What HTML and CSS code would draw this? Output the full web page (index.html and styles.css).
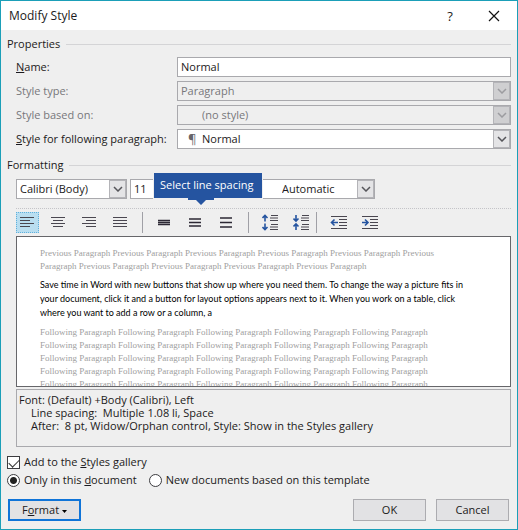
FILE: index.html
```
<!DOCTYPE html>
<html lang="en">
<head>
    <meta charset="UTF-8">
    <meta name="viewport" content="width=device-width, initial-scale=1.0">
    <title>Modify Style</title>
    <link rel="stylesheet" href="styles.css">
</head>
<body>

    <form class="dialog">
        <!-- Title bar -->
        <header class="title-bar">
            <h1>Modify Style</h1>
            <button type="button" class="title-btn" aria-label="Help">?</button>
            <button type="button" class="title-btn" aria-label="Close">
                <svg width="12" height="12" viewBox="0 0 12 12"><path d="M1 1L11 11M11 1L1 11" stroke="#111" stroke-width="1.2"/></svg>
            </button>
        </header>

        <main class="content">
            <!-- Properties -->
            <h2 class="section-title">Properties</h2>
            <div class="properties">
                <label for="name"><u>N</u>ame:</label>
                <div class="field"><input id="name" type="text" value="Normal"></div>

                <label for="type" class="off">Style type:</label>
                <div class="field combo off">
                    <select id="type" disabled><option>Paragraph</option></select>
                    <span class="arrow"><svg width="10" height="6" viewBox="0 0 10 6"><path d="M1 1L5 5L9 1"/></svg></span>
                </div>

                <label for="based" class="off">Style based on:</label>
                <div class="field combo off">
                    <select id="based" class="indent" disabled><option>(no style)</option></select>
                    <span class="arrow"><svg width="10" height="6" viewBox="0 0 10 6"><path d="M1 1L5 5L9 1"/></svg></span>
                </div>

                <label for="following"><u>S</u>tyle for following paragraph:</label>
                <div class="field combo">
                    <span class="pilcrow">¶</span>
                    <select id="following" class="indent"><option>Normal</option></select>
                    <span class="arrow"><svg width="10" height="6" viewBox="0 0 10 6"><path d="M1 1L5 5L9 1"/></svg></span>
                </div>
            </div>

            <!-- Formatting -->
            <h2 class="section-title formatting-title">Formatting</h2>
            <div class="font-row">
                <div class="field combo font-name">
                    <select aria-label="Font"><option>Calibri (Body)</option></select>
                    <span class="arrow"><svg width="10" height="6" viewBox="0 0 10 6"><path d="M1 1L5 5L9 1"/></svg></span>
                </div>
                <div class="field combo font-size">
                    <select aria-label="Font size"><option>11</option></select>
                </div>
                <div class="field combo font-color">
                    <select class="indent" aria-label="Font color"><option>Automatic</option></select>
                    <span class="arrow"><svg width="10" height="6" viewBox="0 0 10 6"><path d="M1 1L5 5L9 1"/></svg></span>
                </div>
            </div>

            <div class="toolbar">
                <div class="tool-group">
                    <button type="button" class="tool active" aria-label="Align left">
                        <svg width="15" height="11" viewBox="0 0 15 11"><path d="M0 0.5H14M0 3.5H10M0 6.5H14M0 9.5H10"/></svg>
                    </button>
                    <button type="button" class="tool" aria-label="Center">
                        <svg width="15" height="11" viewBox="0 0 15 11"><path d="M0 0.5H14M2 3.5H12M0 6.5H14M2 9.5H12"/></svg>
                    </button>
                    <button type="button" class="tool" aria-label="Align right">
                        <svg width="15" height="11" viewBox="0 0 15 11"><path d="M0 0.5H14M4 3.5H14M0 6.5H14M4 9.5H14"/></svg>
                    </button>
                    <button type="button" class="tool" aria-label="Justify">
                        <svg width="15" height="11" viewBox="0 0 15 11"><path d="M0 0.5H14M0 3.5H14M0 6.5H14M0 9.5H14"/></svg>
                    </button>
                </div>
                <div class="tool-group">
                    <button type="button" class="tool thick" aria-label="Single spacing">
                        <svg width="13" height="11" viewBox="0 0 13 11"><path d="M0 3.5H12M0 5.5H12M0 7.5H12"/></svg>
                    </button>
                    <div class="tip-anchor">
                        <button type="button" class="tool thick" aria-label="1.5 spacing" aria-describedby="tip">
                            <svg width="13" height="11" viewBox="0 0 13 11"><path d="M0 2H12M0 5.500H12M0 9H12"/></svg>
                        </button>
                        <div class="tooltip" id="tip" role="tooltip">Select line spacing
                            <svg class="tip-arrow" width="26" height="7" viewBox="0 0 26 7"><path d="M0 0H26V2H18L13 7L8 2H0Z"/></svg>
                        </div>
                    </div>
                    <button type="button" class="tool thick" aria-label="Double spacing">
                        <svg width="13" height="11" viewBox="0 0 13 11"><path d="M0 1H12M0 5.500H12M0 10H12"/></svg>
                    </button>
                </div>
                <div class="tool-group">
                    <button type="button" class="tool" aria-label="Increase paragraph spacing">
                        <svg width="17" height="17" viewBox="0 0 17 17"><path d="M9 1.500H16M8 4H16M8 6.500H16M9 10.500H16M8 13H16M8 15.500H16"/><path class="blue" d="M3 7.500V1.500M0.500 4L3 1.500L5.500 4M3 9.500V15.500M0.500 13L3 15.500L5.500 13"/></svg>
                    </button>
                    <button type="button" class="tool" aria-label="Decrease paragraph spacing">
                        <svg width="17" height="17" viewBox="0 0 17 17"><path d="M9 1.500H16M8 4H16M8 6.500H16M9 10.500H16M8 13H16M8 15.500H16"/><path class="blue" d="M3 1V7M0.500 4.500L3 7L5.500 4.500M3 16V10M0.500 12.500L3 10L5.500 12.500"/></svg>
                    </button>
                </div>
                <div class="tool-group">
                    <button type="button" class="tool" aria-label="Decrease indent">
                        <svg width="17" height="15" viewBox="0 0 17 15"><path d="M1 1.500H17M9 4.500H17M9 7.500H17M9 10.500H17M1 13.500H17"/><path class="blue" d="M8 7.500H2M4.500 4.500L1.500 7.500L4.500 10.500"/></svg>
                    </button>
                    <button type="button" class="tool" aria-label="Increase indent">
                        <svg width="17" height="15" viewBox="0 0 17 15"><path d="M1 1.500H17M9 4.500H17M9 7.500H17M9 10.500H17M1 13.500H17"/><path class="blue" d="M1 7.500H7M4 4.500L7 7.500L4 10.500"/></svg>
                    </button>
                </div>
            </div>

            <!-- Preview -->
            <div class="preview">
                <p class="ghost">Previous Paragraph Previous Paragraph Previous Paragraph Previous Paragraph Previous Paragraph Previous<br>Paragraph Previous Paragraph Previous Paragraph Previous Paragraph Previous Paragraph</p>
                <p class="sample">Save time in Word with new buttons that show up where you need them. To change the way a picture fits in<br>your document, click it and a button for layout options appears next to it. When you work on a table, click<br>where you want to add a row or a column, a</p>
                <p class="ghost">Following Paragraph Following Paragraph Following Paragraph Following Paragraph Following Paragraph<br>Following Paragraph Following Paragraph Following Paragraph Following Paragraph Following Paragraph<br>Following Paragraph Following Paragraph Following Paragraph Following Paragraph Following Paragraph<br>Following Paragraph Following Paragraph Following Paragraph Following Paragraph Following Paragraph<br>Following Paragraph Following Paragraph Following Paragraph Following Paragraph Following Paragraph</p>
            </div>

            <div class="description">
                <p>Font: (Default) +Body (Calibri), Left</p>
                <p class="more">Line spacing:&nbsp; Multiple 1.08 li, Space</p>
                <p class="more">After:&nbsp; 8 pt, Widow/Orphan control, Style: Show in the Styles gallery</p>
            </div>

            <!-- Options -->
            <div class="options">
                <label class="choice"><input type="checkbox" checked>Add to the <u>S</u>tyles gallery</label>
            </div>
            <div class="options">
                <label class="choice"><input type="radio" name="scope" checked>Only in this <u>d</u>ocument</label>
                <label class="choice"><input type="radio" name="scope">New documents based on this template</label>
            </div>
        </main>

        <footer class="actions">
            <button type="button" class="btn format">F<u>o</u>rmat <svg width="5" height="3" viewBox="0 0 5 3"><path d="M0 0H5L2.500 3Z"/></svg></button>
            <button type="submit" class="btn">OK</button>
            <button type="button" class="btn">Cancel</button>
        </footer>
    </form>

</body>
</html>
```
FILE: styles.css
```
:root {
    --face: #efefef;
    --line: #a9a9ad;
    --frame: #1b9fb8;
    --text: #1c1a20;
    --muted: #77777b;
    --blue: #2554a0;
}

* {
    box-sizing: border-box;
}

body {
    margin: 0;
    font-family: "Open Sans", "Noto Sans", sans-serif;
    font-size: 11px;
    line-height: 16px;
    color: var(--text);
}

h1, h2, p {
    margin: 0;
    font-weight: normal;
}

button, input, select {
    font: inherit;
    color: inherit;
    margin: 0;
}

.dialog {
    min-height: 100vh;
    display: flex;
    flex-direction: column;
    background: var(--face);
    border: 1px solid var(--frame);
    font-weight: 500;
}

/* Title bar */
.title-bar {
    display: flex;
    align-items: center;
    height: 29px;
    padding: 0 8px;
    background: white;
}

.title-bar h1 {
    flex: 1;
    font-size: 12px;
}

.title-btn {
    width: 30px;
    margin-left: 14px;
    padding: 0;
    border: none;
    background: none;
    font-size: 13px;
}

.title-btn svg {
    display: block;
    margin: 0 auto;
}

.content {
    padding: 6px 6px 0;
}

.section-title {
    display: flex;
    align-items: center;
    gap: 6px;
    font-size: 11px;
    font-weight: 500;
}

.section-title::after {
    content: "";
    flex: 1;
    height: 1px;
    background: #d4d4d6;
}

.formatting-title {
    margin-top: 8px;
}

/* Properties */
.properties {
    display: grid;
    grid-template-columns: 161px 1fr;
    row-gap: 4px;
    align-items: center;
    margin-top: 5px;
    padding-left: 9px;
}

.properties label {
    white-space: nowrap;
}

.properties label.off {
    color: var(--muted);
}

.field {
    position: relative;
    display: flex;
    height: 20px;
    background: white;
    border: 1px solid var(--line);
}

.field input,
.field select {
    flex: 1;
    min-width: 0;
    padding: 0 3px;
    border: none;
    border-radius: 0;
    outline: none;
    background: none;
    appearance: none;
}

.field select.indent {
    padding-left: 24px;
}

.field.off {
    background: var(--face);
}

.field.off select {
    color: var(--muted);
    opacity: 1;
}

.arrow {
    display: flex;
    align-items: center;
    justify-content: center;
    width: 17px;
    border: 1px solid #b4b4b8;
    background: #e4e4e6;
    pointer-events: none;
}

.arrow svg {
    fill: none;
    stroke: #55555a;
    stroke-width: 1.5;
}

.off .arrow {
    background: #cfcfd1;
}

.off .arrow svg {
    stroke: #9c9ca0;
}

.pilcrow {
    position: absolute;
    left: 10px;
    top: 1px;
    font-size: 13px;
    color: #66666a;
}

/* Font row */
.font-row {
    display: flex;
    gap: 3px;
    margin-top: 6px;
    padding: 0 0 9px 9px;
}

.font-name {
    width: 111px;
}

.font-size {
    width: 40px;
}

.font-color {
    width: 118px;
    margin-left: 84px;
}

/* Toolbar */
.toolbar {
    display: flex;
    align-items: center;
    height: 28px;
    margin-left: 9px;
    border-top: 1px dotted #c4c4c8;
}

.tool-group {
    display: flex;
    gap: 8px;
    padding-right: 10px;
}

.tool-group + .tool-group {
    padding-left: 10px;
    border-left: 1px solid #a0a0a6;
}

.tool-group:nth-child(3) {
    padding-right: 3px;
}

.tool {
    display: flex;
    align-items: center;
    justify-content: center;
    width: 23px;
    height: 21px;
    padding: 0;
    border: 1px solid transparent;
    background: none;
}

.tool.active {
    background: #b9def0;
    border: 1px dotted #5fb0dc;
}

.tool svg {
    fill: none;
    stroke: #4a4750;
    stroke-width: 1.2;
}

.tool.thick svg {
    stroke: #2c2834;
    stroke-width: 1.5;
}

.tool .blue {
    stroke: var(--blue);
    stroke-width: 1.6;
}

.tip-anchor {
    position: relative;
}

.tooltip {
    position: absolute;
    left: -30px;
    bottom: 35px;
    padding: 4px 9px 5px 6px;
    background: var(--blue);
    box-shadow: 0 0 0 1px var(--face);
    color: white;
    white-space: nowrap;
}

.tip-arrow {
    position: absolute;
    left: 34px;
    top: 100%;
    fill: var(--blue);
}

/* Preview */
.preview {
    height: 151px;
    margin-left: 9px;
    padding: 10px 23px 0;
    overflow: hidden;
    white-space: nowrap;
    background: white;
    border: 1px solid #66666a;
}

.ghost {
    font-family: "Liberation Serif", serif;
    font-size: 9px;
    line-height: 13px;
    color: #a0a0a0;
}

.sample {
    margin: 5px 0 6px;
    font-family: Lato, sans-serif;
    font-size: 9px;
    line-height: 14px;
    color: #000;
}

.description {
    height: 58px;
    margin: 2px 0 0 9px;
    padding: 3px 2px;
    line-height: 13px;
    border: 1px solid var(--line);
}

.description .more {
    padding-left: 12px;
}

/* Options */
.options {
    display: flex;
    gap: 12px;
    margin-top: 2px;
}

.description + .options {
    margin-top: 7px;
}

.choice {
    display: flex;
    align-items: center;
    white-space: pre;
}

.choice input {
    flex: none;
    width: 13px;
    height: 13px;
    margin-right: 4px;
    appearance: none;
    background: white;
    border: 1px solid #3c3c40;
}

.choice input[type="radio"] {
    border-radius: 50%;
}

.choice input[type="radio"]:checked {
    background: radial-gradient(circle, #222 3px, white 4px);
}

/* tick mark */
.choice input[type="checkbox"]:checked::before {
    content: "";
    display: block;
    width: 9px;
    height: 5px;
    margin: 2px 0 0 1px;
    border: solid #333;
    border-width: 0 0 1px 1px;
    transform: rotate(-45deg);
}

/* Buttons */
.actions {
    display: flex;
    gap: 10px;
    margin-top: auto;
    padding: 0 8px 8px 7px;
}

.btn {
    width: 73px;
    height: 22px;
    padding: 0;
    border: 1px solid #acacb0;
    background: #e2e2e4;
}

.btn.format {
    margin-right: auto;
    border: 2px solid #0f74d8;
}

.btn svg {
    vertical-align: middle;
}
```
